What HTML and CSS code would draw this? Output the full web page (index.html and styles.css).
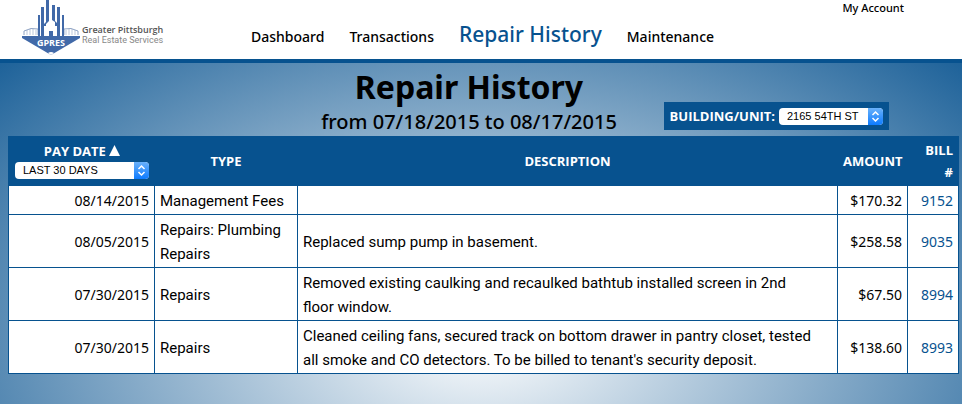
FILE: index.html
```html
<!DOCTYPE html>
<html lang="en">
<head>
<meta charset="utf-8">
<title>Repair History</title>
<link rel="stylesheet" href="styles.css">
</head>
<body>
<header class="site-header">
  <a class="brand" href="#">
    <svg class="brand-mark" viewBox="0 0 58 56" aria-hidden="true">
      <g fill="none" stroke="#8fa3c4">
        <path d="M2 35V31Q9 27 16 29V35M42 35V29Q49 27 56 31V35"/>
        <path d="M5 30V35M8 29V35M11 29V35M14 30V35M44 30V35M47 29V35M50 29V35M53 30V35" stroke-width=".6"/>
      </g>
      <g fill="#4169a8">
        <path d="M0 36H58V38L29 55L0 38Z"/>
        <path d="M16 15h2v21h-2zM19 7h3v29h-3zM24 0h3v21l-3 3zM30 5h3v17l-3-2zM35 7h3v29h-3zM40 15h2v21h-2z"/>
        <path d="M22 24L24 22V26H22zM33 21L35 23V26H33z"/>
        <path d="M27 31h4v6h-4z"/>
      </g>
      <text class="brand-code" x="29" y="46" text-anchor="middle">GPRES</text>
      <path d="M26 53Q29 51 32 53L29 55Z" fill="#fff"/>
    </svg>
    <span class="brand-text"><span class="brand-name">Greater Pittsburgh</span><span class="brand-sub">Real Estate Services</span></span>
  </a>
  <nav class="main-nav">
    <a href="#">Dashboard</a>
    <a href="#">Transactions</a>
    <a class="current" href="#" aria-current="page">Repair History</a>
    <a href="#">Maintenance</a>
  </nav>
  <a class="account" href="#">My Account</a>
</header>
<main class="content">
  <div class="heading">
    <div class="titles">
      <h1>Repair History</h1>
      <p>from 07/18/2015 to 08/17/2015</p>
    </div>
    <div class="unit-filter">
      <label for="unit">BUILDING/UNIT:</label>
      <span class="picker">
        <select id="unit"><option>2165 54TH ST</option></select>
        <svg viewBox="0 0 14 17" aria-hidden="true"><path d="M4 7L7 4L10 7M4 10L7 13L10 10"/></svg>
      </span>
    </div>
  </div>
  <table class="repairs">
    <colgroup><col class="col-date"><col class="col-type"><col><col class="col-amount"><col class="col-bill"></colgroup>
    <thead>
      <tr>
        <th class="date-head">
          <label for="range">PAY DATE <svg class="sort" viewBox="0 0 11 11" aria-hidden="true"><path d="M5.500 0L11 11H0Z"/></svg></label>
          <span class="picker">
            <select id="range"><option>LAST 30 DAYS</option></select>
            <svg viewBox="0 0 14 17" aria-hidden="true"><path d="M4 7L7 4L10 7M4 10L7 13L10 10"/></svg>
          </span>
        </th>
        <th>TYPE</th><th>DESCRIPTION</th><th class="num">AMOUNT</th><th class="num">BILL<br>#</th>
      </tr>
    </thead>
    <tbody>
      <tr><td class="num">08/14/2015</td><td>Management Fees</td><td></td><td class="num">$170.32</td><td class="num"><a href="#">9152</a></td></tr>
      <tr><td class="num">08/05/2015</td><td>Repairs: Plumbing Repairs</td><td>Replaced sump pump in basement.</td><td class="num">$258.58</td><td class="num"><a href="#">9035</a></td></tr>
      <tr><td class="num">07/30/2015</td><td>Repairs</td><td>Removed existing caulking and recaulked bathtub installed screen in 2nd floor&nbsp;window.</td><td class="num">$67.50</td><td class="num"><a href="#">8994</a></td></tr>
      <tr><td class="num">07/30/2015</td><td>Repairs</td><td>Cleaned ceiling fans, secured track on bottom drawer in pantry closet, tested all&nbsp;smoke and CO detectors. To be billed to tenant's security deposit.</td><td class="num">$138.60</td><td class="num"><a href="#">8993</a></td></tr>
    </tbody>
  </table>
</main>
</body>
</html>
```
FILE: styles.css
```css
* { box-sizing: border-box; }
html { height: 100%; }
body {
  margin: 0;
  min-height: 100%;
  display: flex;
  flex-direction: column;
  font-family: "Noto Sans", sans-serif;
  font-size: 14px;
  line-height: 24px;
  color: #000;
}
a { color: #07528f; text-decoration: none; }
h1, p { margin: 0; }

.site-header {
  display: flex;
  align-items: flex-start;
  height: 63px;
  padding: 0 58px 0 22px;
  background: #fff;
  border-bottom: 4px solid #07528f;
}
.brand { display: flex; flex: 0 0 229px; }
.brand-mark { width: 58px; height: 56px; }
.brand-code { font: 700 9px "Open Sans", sans-serif; fill: #fff; }
.brand-text { display: flex; flex-direction: column; padding: 25px 0 0 2px; white-space: nowrap; }
.brand-name { font: 600 9px/10px "Open Sans", sans-serif; color: #555; }
.brand-sub { font: 9px/10px Roboto, sans-serif; color: #888; }
.main-nav {
  display: flex;
  align-items: baseline;
  gap: 25px;
  padding-top: 18px;
  font-weight: 500;
  line-height: 32px;
  white-space: nowrap;
}
.main-nav a { color: #000; }
.main-nav .current { font-size: 21px; color: #07528f; }
.account {
  margin-left: auto;
  font-weight: 500;
  font-size: 11px;
  line-height: 16px;
  color: #000;
}

.content {
  flex: 1;
  padding: 0 3px 24px 8px;
  background: radial-gradient(75% 130% at 50% 80%, #fff 0%, #07528f 100%);
}
.heading {
  display: grid;
  grid-template-columns: 1fr auto 1fr;
  align-items: end;
  padding: 4px 29px 0 0;
}
.titles {
  grid-column: 2;
  text-align: center;
  white-space: nowrap;
}
h1 { font-size: 32px; line-height: 40px; font-weight: 700; }
.titles p { font-size: 20px; line-height: 29px; font-weight: 500; }
.unit-filter {
  display: flex;
  align-items: center;
  justify-self: end;
  gap: 4px;
  height: 28px;
  margin: 0 41px 6px 0;
  padding: 0 6px;
  background: #07528f;
  color: #fff;
  font: 700 13px "Open Sans", sans-serif;
  white-space: nowrap;
}
.picker { position: relative; display: block; height: 17px; }
.picker select {
  display: block;
  appearance: none;
  width: 100%;
  height: 17px;
  padding: 0 24px 0 8px;
  border: 0;
  border-radius: 4px;
  background: #fff;
  color: #000;
  font: 11px/17px "Liberation Sans", sans-serif;
}
.picker svg {
  position: absolute;
  top: 0;
  right: 0;
  width: 15px;
  height: 17px;
  border-radius: 0 4px 4px 0;
  background: linear-gradient(#69b1fa, #0d7bff);
  fill: none;
  stroke: #fff;
  stroke-width: 1.5;
  pointer-events: none;
}

.repairs {
  width: 100%;
  table-layout: fixed;
  border-collapse: collapse;
  background: #fff;
}
.col-date { width: 146px; }
.col-type { width: 143px; }
.col-amount { width: 70px; }
.col-bill { width: 51px; }
.repairs th {
  height: 49px;
  padding: 2px 5px;
  border: 1px solid #07528f;
  background: #07528f;
  color: #fff;
  font: 700 13px/22px "Open Sans", sans-serif;
}
.repairs td { padding: 3px 5px 1px; border: 1px solid #07528f; font-family: Roboto, sans-serif; font-size: 15px; }
.repairs .num { text-align: right; }
.repairs td.num { font-family: "Noto Sans", sans-serif; font-size: 14px; }
.repairs .date-head { padding: 1px 5px 4px 6px; }
.date-head label { display: block; }
.sort { width: 11px; height: 11px; fill: #fff; }
```
